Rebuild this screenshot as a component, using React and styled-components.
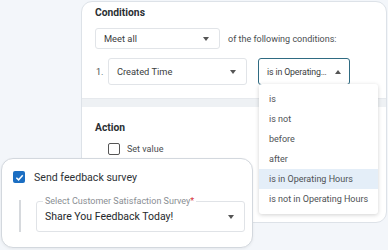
import React from 'react'
import styled, { createGlobalStyle } from 'styled-components'

const GlobalStyle = createGlobalStyle`
body{
  margin:0;
  background-color:#f3f6fa;
  font-family: Roboto, "Liberation Sans", sans-serif;
  color:#333;
}
`
const Stage = styled.div`
position:relative;
width:388px;
height:250px;
overflow:hidden;
`
const RuleCard = styled.div`
margin:1px 0 0 81px;
width:306px;
height:222px;
box-sizing:border-box;
background:#fff;
border:1px solid #dde2e8;
border-radius:11px;
display:flex;
flex-direction:column;
overflow:hidden;
`
const Section = styled.div`
padding:${p => p.$top ?? 0}px 14px ${p => p.$bottom ?? 0}px 13px;
display:flex;
flex-direction:column;
`
const Title = styled.div`
font-size:10.3px;
font-weight:700;
line-height:22px;
color:#2b2f33;
`
const Row = styled.div`
display:flex;
align-items:center;
gap:${p => p.$gap ?? 8}px;
margin-top:${p => p.$mt ?? 0}px;
padding-left:${p => p.$pl ?? 0}px;
`
const Select = styled.div`
box-sizing:border-box;
width:${p => p.$w}px;
height:${p => p.$h}px;
margin-left:${p => p.$ml ?? 0}px;
border:1px solid ${p => p.$active ? '#2f6b82' : '#e1e4e8'};
border-radius:3px;
display:flex;
align-items:center;
justify-content:space-between;
padding:0 ${p => p.$pr ?? 10}px 0 ${p => p.$pl ?? 8}px;
font-size:${p => p.$fs ?? 9.3}px;
letter-spacing:${p => p.$ls ?? 0}px;
color:#3a3d40;
background:#fff;
white-space:nowrap;
`
const Caret = styled.span`
width:0;
height:0;
border-left:3.5px solid transparent;
border-right:3.5px solid transparent;
${p => p.$up ? 'border-bottom:4px solid #555;' : 'border-top:4px solid #555;'}
`
const Muted = styled.span`
font-size:9px;
color:#4a4d50;
`
const Number = styled.span`
font-size:9px;
color:#4a4d50;
width:12px;
margin-left:1px;
`
const Band = styled.div`
height:8px;
background:#eef1f4;
border-top:1px solid #e6e9ed;
`
const Box = styled.span`
box-sizing:border-box;
width:12px;
height:12px;
border:1.5px solid #555;
border-radius:2px;
`
const Menu = styled.div`
position:absolute;
left:259px;
top:84px;
width:119px;
padding:5px 0;
background:#fff;
border-radius:3px;
box-shadow:0 1px 4px rgba(0,0,0,0.18);
`
const Item = styled.div`
height:20px;
line-height:20px;
padding-left:10px;
font-size:9px;
color:#4e5154;
background:${p => p.$selected ? '#e4eef8' : 'transparent'};
`
const SurveyCard = styled.div`
position:absolute;
left:1px;
top:158px;
width:252px;
height:90px;
box-sizing:border-box;
background:#fff;
border:1px solid #d3d8de;
border-radius:12px;
padding:8px 0 0 11px;
box-shadow:0 1px 3px rgba(0,0,0,0.06);
`
const CheckRow = styled.div`
display:flex;
align-items:center;
height:20px;
gap:9px;
font-size:10.6px;
color:#2e3236;
`
const Checked = styled.span`
width:12px;
height:12px;
border-radius:2px;
background:#1b6ec2;
display:flex;
align-items:center;
justify-content:center;
`
const Nested = styled.div`
display:flex;
margin-top:14px;
padding-left:6px;
`
const Rail = styled.div`
width:2px;
height:32px;
background:#d6d9dd;
margin-right:15px;
margin-top:-1px;
`
const Outlined = styled.div`
position:relative;
box-sizing:border-box;
width:209px;
height:31px;
border:1px solid #e0e3e7;
border-radius:3px;
display:flex;
align-items:center;
justify-content:space-between;
padding:0 10px 0 8px;
font-size:10.5px;
color:#25282b;
`
const Floating = styled.span`
position:absolute;
left:6px;
top:-6px;
padding:0 2px;
background:#fff;
font-size:9px;
line-height:11px;
color:#8a8e93;
`
const Star = styled.span`
color:#d8353b;
`

const items = ['is', 'is not', 'before', 'after', 'is in Operating Hours', 'is not in Operating Hours']

export default function App() {
  return (
    <Stage>
      <GlobalStyle />
      <RuleCard>
        <Section $bottom={13}>
          <Title>Conditions</Title>
          <Row $mt={4}>
            <Select $w={125} $h={21}>Meet all<Caret /></Select>
            <Muted>of the following conditions:</Muted>
          </Row>
          <Row $mt={9} $gap={0}>
            <Number>1.</Number>
            <Select $w={139} $h={27}>Created Time<Caret /></Select>
            <Select $w={92} $h={27} $ml={11} $active $pr={8} $fs={8.8} $ls={-0.15}>is in Operating…<Caret $up /></Select>
          </Row>
        </Section>
        <Band />
        <Section $top={10}>
          <Title>Action</Title>
          <Row $mt={4} $gap={7} $pl={13}>
            <Box />
            <Muted>Set value</Muted>
          </Row>
        </Section>
      </RuleCard>
      <Menu>
        {items.map((item, i) => (
          <Item key={item} $selected={i === 4}>{item}</Item>
        ))}
      </Menu>
      <SurveyCard>
        <CheckRow>
          <Checked>
            <svg width="9" height="9" viewBox="0 0 10 10">
              <path d="M1.5 5.2 L4 7.6 L8.6 2.4" fill="none" stroke="#fff" strokeWidth="1.6" />
            </svg>
          </Checked>
          Send feedback survey
        </CheckRow>
        <Nested>
          <Rail />
          <Outlined>
            <Floating>Select Customer Satisfaction Survey<Star>*</Star></Floating>
            Share You Feedback Today!
            <Caret />
          </Outlined>
        </Nested>
      </SurveyCard>
    </Stage>
  )
}
